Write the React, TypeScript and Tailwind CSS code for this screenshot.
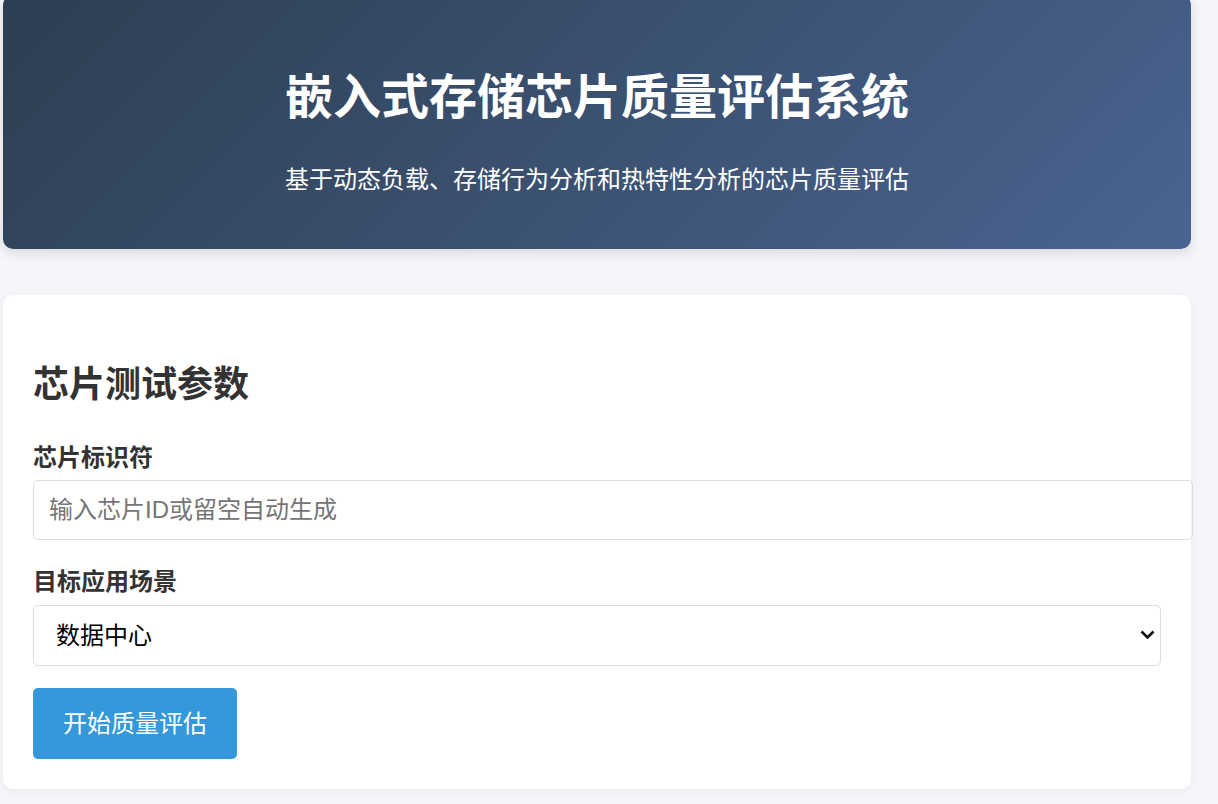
export default function App() {
    return (
        <div className="min-h-screen bg-[#f5f6fa] overflow-hidden font-['Liberation_Sans','Noto_Sans_CJK_SC',sans-serif] text-[#333]">
            <div className="w-[1188px] ml-[3px]">
                {/* Header */}
                <header className="-mt-[5px] rounded-[10px] bg-[linear-gradient(135deg,#2c3e50,#4a6491)] text-white text-center pt-[74px] pb-[55px] shadow-[0_4px_12px_rgba(0,0,0,0.12)]">
                    <h1 className="text-[48px] font-bold leading-[58px]">嵌入式存储芯片质量评估系统</h1>
                    <p className="mt-[38px] text-[24px] leading-[29px]">基于动态负载、存储行为分析和热特性分析的芯片质量评估</p>
                </header>

                {/* Form Card */}
                <section className="mt-[46px] bg-white rounded-[10px] p-[30px] shadow-[0_2px_10px_rgba(0,0,0,0.05)]">
                    <h2 className="mt-[38px] text-[36px] font-bold leading-[43px] text-[#333]">芯片测试参数</h2>

                    <label className="block mt-[37px] text-[24px] font-bold leading-[29px]">芯片标识符</label>
                    <input
                        type="text"
                        placeholder="输入芯片ID或留空自动生成"
                        className="block mt-[8px] box-content w-full h-[58px] px-[15px] border border-[#ddd] rounded-[5px] text-[24px] placeholder:text-[#757575] outline-none"
                    />

                    <label className="block mt-[27px] text-[24px] font-bold leading-[29px]">目标应用场景</label>
                    <div className="relative mt-[9px]">
                        <select className="block w-full h-[61px] pl-[22px] pr-[40px] border border-[#ddd] rounded-[5px] text-[24px] text-black bg-white appearance-none outline-none">
                            <option>数据中心</option>
                            <option>汽车电子</option>
                            <option>消费电子</option>
                            <option>工业控制</option>
                        </select>
                        <svg className="absolute right-[6px] top-[25px] w-[15px] h-[10px] pointer-events-none" viewBox="0 0 15 10" fill="none">
                            <path d="M1.5 1.5 L7.5 7.5 L13.5 1.5" stroke="#111" strokeWidth="2.6" />
                        </svg>
                    </div>

                    <button className="mt-[22px] h-[71px] px-[30px] rounded-[5px] bg-[#3498db] text-white text-[24px]">开始质量评估</button>
                </section>
            </div>
        </div>
    );
}
